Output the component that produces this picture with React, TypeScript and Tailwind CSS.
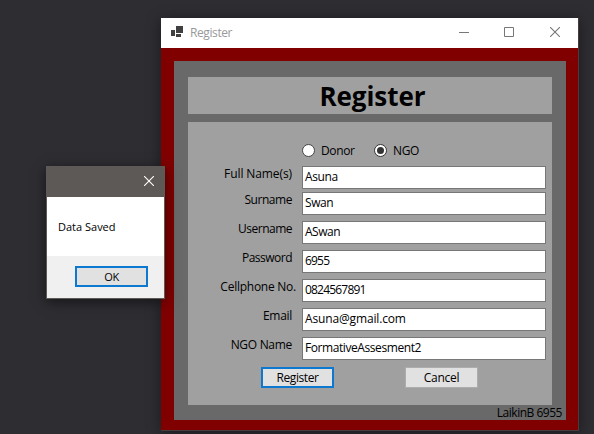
import React from "react";

type FieldProps = { label: string; value: string; labelClass: string; valueClass: string; rowClass?: string };

function Field({ label, value, labelClass, valueClass, rowClass = "mt-[6px]" }: FieldProps) {
  return (
    <div className={`flex h-[23px] ${rowClass}`}>
      <div className="flex w-[114px] shrink-0 justify-end">
        <label className={`h-4 whitespace-nowrap leading-[16px] ${labelClass}`}>{label}</label>
      </div>
      <div className="h-[23px] w-[244px] border border-[#777777] bg-white pl-[2px]">
        <span className={`block whitespace-nowrap leading-[20px] ${valueClass}`}>{value}</span>
      </div>
    </div>
  );
}

function Close({ className }: { className: string }) {
  return (
    <svg className={className} width="10" height="10" viewBox="0 0 10 10" fill="none" stroke="currentColor" strokeWidth="1.1">
      <path d="M0 0l10 10M10 0l-10 10" />
    </svg>
  );
}

export default function App() {
  return (
    <main className="relative h-[434px] w-[594px] overflow-hidden bg-[#2d2d32] font-['Open_Sans','Noto_Sans',sans-serif] text-[12px] text-black">
      <section className="absolute left-[161px] top-[18px] flex h-[413px] w-[418px] flex-col border-b border-r border-[#4a3b3d] bg-[#800000] shadow-[0_2px_14px_rgba(0,0,0,0.4)]">
        <header className="flex h-[30px] shrink-0 items-start bg-white text-[#999999]">
          <svg className="ml-[10px] mt-[8px]" width="12" height="11" viewBox="0 0 12 11" fill="#3f403f">
            <path d="M0 4h4v6H0zM5 0h7v7H5zM5 8h5v3H5z" />
          </svg>
          <span className="ml-[7px] mt-[6px] leading-[18px] tracking-[-0.4px]">Register</span>
          <div className="ml-auto mt-[9px] flex pr-[18px]">
            <svg width="10" height="11" viewBox="0 0 10 11" stroke="#777777"><path d="M0 5.5h10" /></svg>
            <svg className="ml-[35px]" width="10" height="10" viewBox="0 0 10 10" fill="none" stroke="#777777"><path d="M.5 .5h9v9h-9z" /></svg>
            <Close className="ml-[36px] text-[#777777]" />
          </div>
        </header>
        <div className="ml-[13px] mt-[13px] h-[359px] w-[392px] bg-[#696969] px-[14px] pt-[16px]">
          <h1 className="h-[37px] w-[364px] bg-[#a0a0a0] pl-[5px] text-center text-[26px] font-bold leading-[39px] tracking-[-0.05px]">Register</h1>
          <form className="mt-[8px] h-[283px] w-[364px] bg-[#a0a0a0]" onSubmit={(e) => e.preventDefault()}>
            <div className="flex h-[44px] pl-[114px] pt-[20px]">
              <span className="mt-[2px] size-[13px] rounded-full border border-[#444444] bg-white" />
              <span className="ml-[6px] w-[53px] leading-[17px] tracking-[-0.35px]">Donor</span>
              <span className="mt-[2px] flex size-[13px] items-center justify-center rounded-full border border-[#333333] bg-white">
                <span className="size-[7px] rounded-full bg-[#333333]" />
              </span>
              <span className="ml-[6px] leading-[17px] tracking-[-0.4px]">NGO</span>
            </div>
            <Field label="Full Name(s)" value="Asuna" labelClass="mr-[10px] tracking-[-0.1px]" valueClass="tracking-[-0.4px]" rowClass="mt-0" />
            <Field label="Surname" value="Swan" labelClass="mr-[10px] tracking-[-0.45px]" valueClass="tracking-[-0.4px]" rowClass="mt-[3px]" />
            <Field label="Username" value="ASwan" labelClass="mr-[10px] tracking-[-0.5px]" valueClass="tracking-[-0.5px]" />
            <Field label="Password" value="6955" labelClass="mr-[10px] tracking-[-0.5px]" valueClass="tracking-[-0.8px]" />
            <Field label="Cellphone No." value="0824567891" labelClass="mr-[6px] tracking-[-0.25px]" valueClass="tracking-[-0.8px]" />
            <Field label="Email" value="Asuna@gmail.com" labelClass="mr-[10px] tracking-[-0.3px]" valueClass="tracking-[-0.15px]" />
            <Field label="NGO Name" value="FormativeAssesment2" labelClass="mr-[10px] tracking-[-0.3px]" valueClass="tracking-[-0.42px]" />
            <div className="flex pl-[73px] pt-[7px]">
              <button className="h-[21px] w-[73px] border-2 border-[#0c78d0] bg-[#e1e1e1] leading-[17px] tracking-[-0.4px]">Register</button>
              <button className="ml-[71px] h-[21px] w-[73px] border border-[#adadad] bg-[#e1e1e1] leading-[19px] tracking-[-0.3px]">Cancel</button>
            </div>
          </form>
          <p className="mr-[-10px] text-right leading-[15px] tracking-[-0.48px]">LaikinB 6955</p>
        </div>
      </section>

      <section className="absolute left-[46px] top-[166px] flex h-[133px] w-[119px] flex-col border border-[#5d5956] bg-white shadow-[0_3px_12px_rgba(0,0,0,0.5)]">
        <header className="flex h-[30px] justify-end bg-[#5d5956] pr-[10px] pt-[9px] text-white">
          <Close className="" />
        </header>
        <p className="h-[59px] pl-[11px] pt-[21px] text-[11px] leading-[17px]">Data Saved</p>
        <footer className="flex flex-1 justify-end bg-[#f0f0f0] pr-[16px] pt-[10px]">
          <button className="h-[21px] w-[73px] border-2 border-[#0c78d0] bg-[#e1e1e1] text-[11px] leading-[17px] tracking-[-0.3px]">OK</button>
        </footer>
      </section>
    </main>
  );
}
